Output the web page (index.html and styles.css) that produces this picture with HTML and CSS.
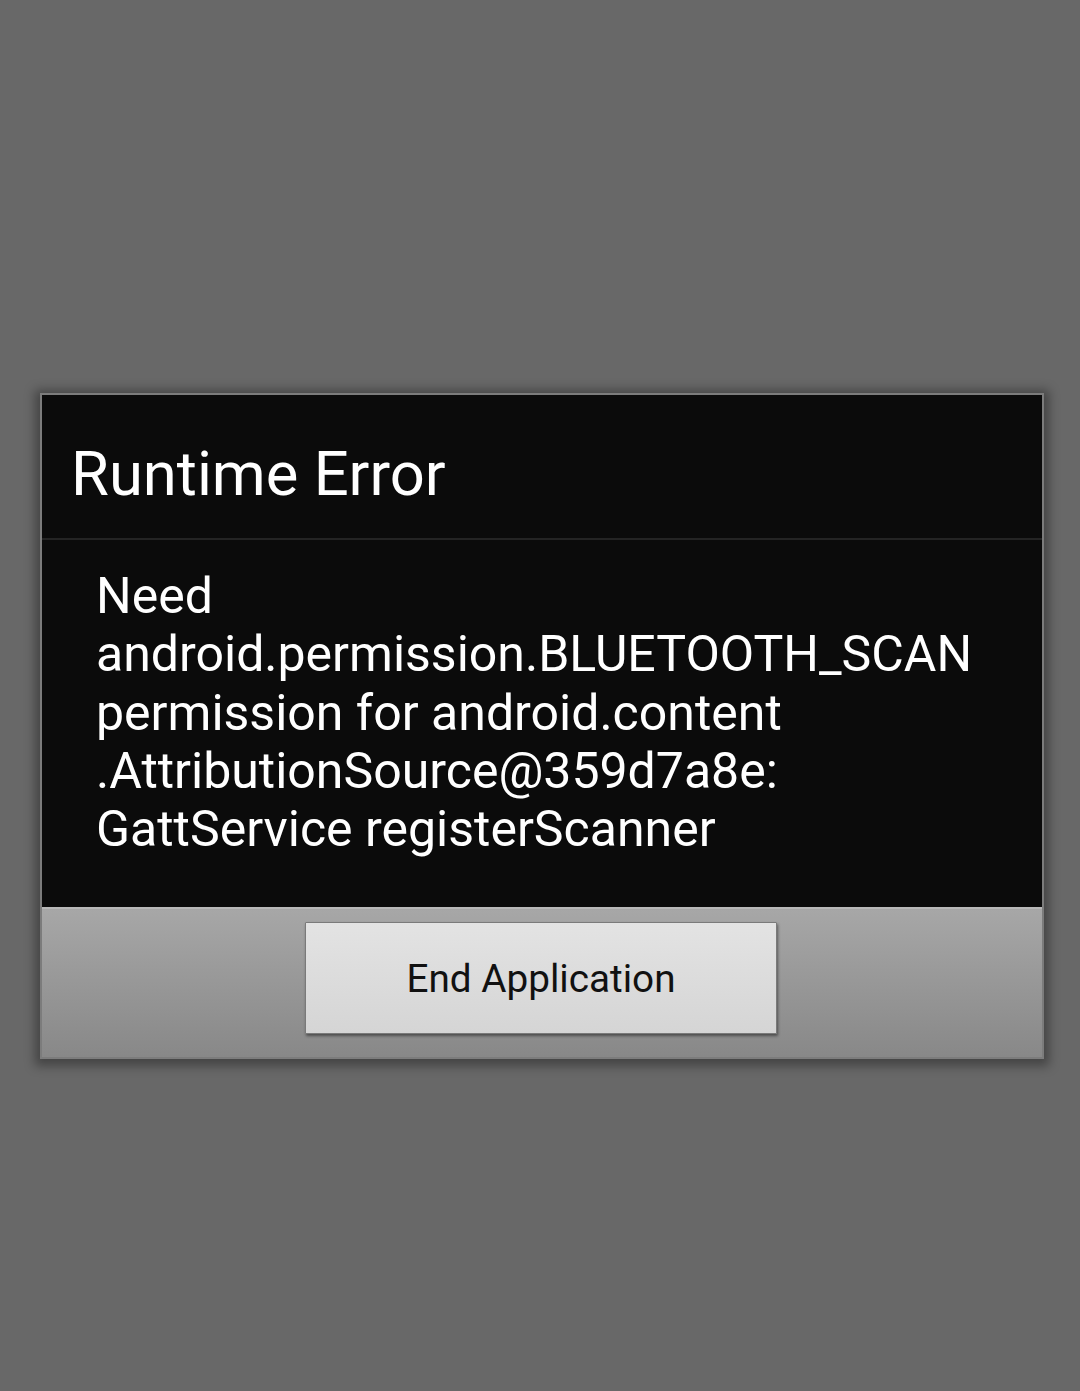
FILE: index.html
```html
<!DOCTYPE html>
<html>
<head>
<meta charset="utf-8">
<link rel="stylesheet" href="styles.css">
</head>
<body>
<div class="dialog">
  <div class="title">Runtime Error</div>
  <div class="divider"></div>
  <div class="message">Need android.permission.BLUETOOTH_SCAN permission for android.content .AttributionSource@359d7a8e: GattService registerScanner</div>
  <div class="buttons">
    <button class="button">End Application</button>
  </div>
</div>
</body>
</html>
```
FILE: styles.css
```css
html, body {
  margin: 0;
  padding: 0;
}
body {
  background: #686868;
  width: 1080px;
  height: 1391px;
  overflow: hidden;
  font-family: Roboto, "Noto Sans", sans-serif;
  padding-top: 393px;
  box-sizing: border-box;
}
.dialog {
  margin-left: 40px;
  width: 1004px;
  box-sizing: border-box;
  border: 2px solid #7c7c7c;
  box-shadow: 0 2px 10px 5px rgba(0, 0, 0, 0.35);
}
.title {
  background: #0b0b0b;
  height: 143px;
  box-sizing: border-box;
  padding-left: 29px;
  padding-top: 44px;
  font-size: 61.5px;
  line-height: 70px;
  color: #ffffff;
}
.divider {
  height: 2px;
  background: #242424;
}
.message {
  background: #0b0b0b;
  height: 367px;
  box-sizing: border-box;
  padding: 27px 30px 0 54px;
  font-size: 50px;
  line-height: 58.3px;
  color: #ffffff;
}
.buttons {
  height: 150px;
  box-sizing: border-box;
  border-top: 2px solid #b8b8b8;
  background: linear-gradient(#a7a7a7, #888888);
  display: flex;
  justify-content: center;
  padding-top: 13px;
}
.button {
  width: 472px;
  height: 112px;
  margin-left: -2px;
  border: 1px solid #7a7a7a;
  border-radius: 1px;
  background: linear-gradient(#e3e3e3, #d5d5d5);
  box-shadow: 1px 2px 3px rgba(0, 0, 0, 0.45);
  font-family: Roboto, "Noto Sans", sans-serif;
  font-size: 38.7px;
  color: #111111;
  padding: 0;
}
```
